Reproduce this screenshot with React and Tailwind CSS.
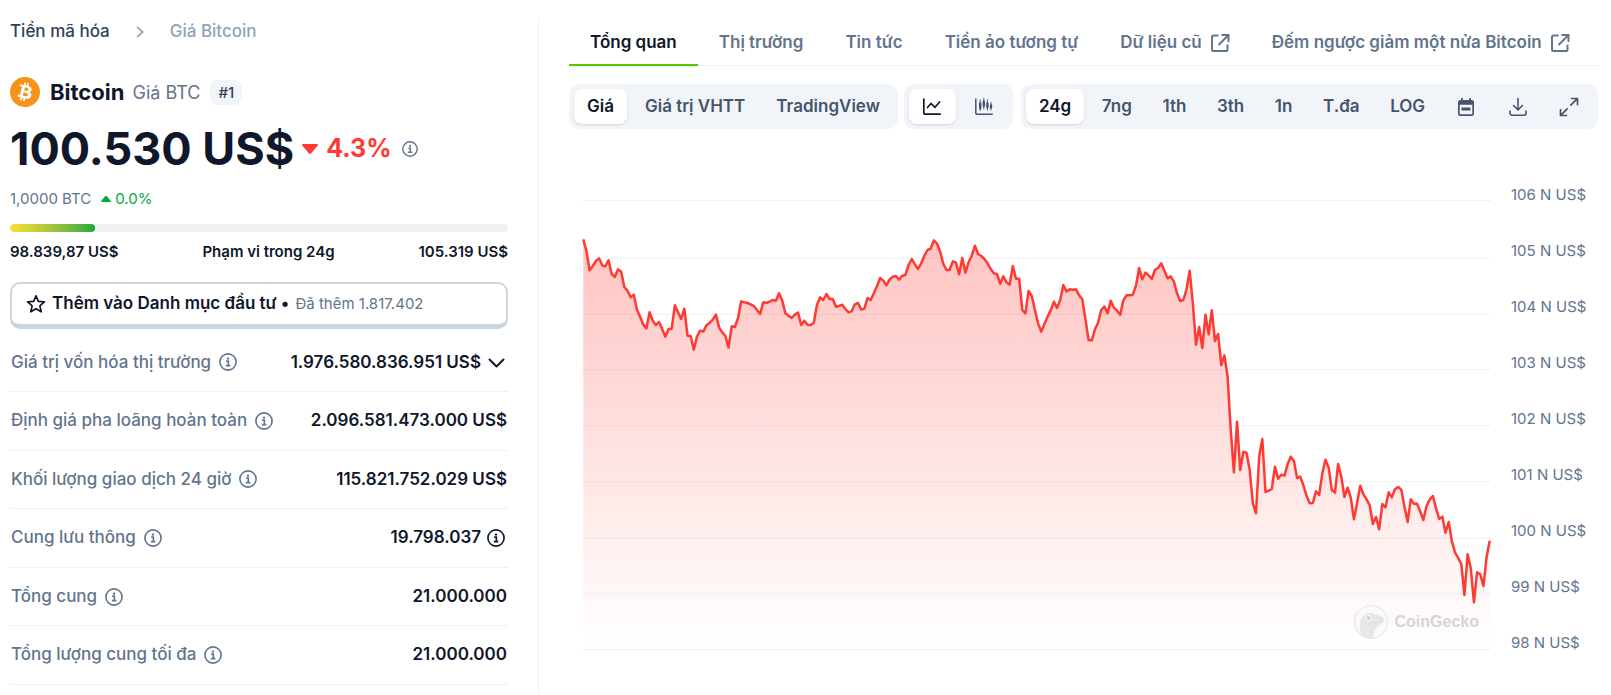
import { useState } from 'react';
import { SiBitcoin } from 'react-icons/si';

// Sampled every 5 minutes. Distance down the plot, 168 units per 1000 US$.
const SAMPLES = [
  148, 183, 241, 228, 213, 205, 226, 229, 211, 252, 261, 238, 245, 291, 302, 322, 314, 359, 380, 404,
  415, 367, 392, 405, 396, 418, 440, 417, 416, 346, 367, 387, 356, 437, 438, 479, 440, 422, 425, 406,
  399, 389, 374, 412, 427, 438, 473, 409, 411, 384, 334, 337, 339, 343, 348, 360, 372, 337, 339, 335,
  330, 332, 310, 332, 370, 377, 384, 374, 368, 405, 392, 404, 405, 398, 344, 322, 330, 312, 327, 327,
  350, 348, 344, 357, 367, 364, 343, 339, 359, 356, 324, 330, 310, 288, 264, 272, 286, 268, 260, 258,
  269, 257, 255, 225, 207, 223, 237, 220, 197, 180, 176, 151, 161, 185, 222, 240, 240, 214, 218, 253,
  204, 248, 217, 197, 167, 192, 198, 207, 220, 237, 250, 252, 281, 259, 277, 284, 228, 266, 266, 360,
  370, 303, 318, 360, 400, 425, 402, 380, 361, 335, 354, 330, 285, 304, 298, 299, 298, 316, 328, 388,
  450, 451, 418, 398, 360, 350, 370, 332, 353, 362, 374, 331, 316, 316, 314, 287, 234, 268, 248, 256,
  267, 240, 234, 220, 242, 265, 259, 275, 310, 333, 330, 298, 242, 340, 464, 411, 474, 374, 433, 361,
  453, 432, 525, 496, 560, 720, 847, 695, 840, 785, 788, 840, 940, 970, 800, 747, 906, 902, 897, 830,
  866, 854, 857, 823, 800, 813, 864, 860, 886, 917, 940, 939, 904, 915, 850, 809, 833, 900, 908, 822,
  860, 921, 893, 923, 988, 940, 887, 913, 928, 946, 1002, 981, 1018, 942, 952, 907, 922, 898, 891, 899,
  950, 996, 928, 941, 941, 965, 990, 948, 929, 918, 955, 987, 980, 1028, 996, 1053, 1087, 1104, 1122, 1215,
  1093, 1135, 1237, 1147, 1153, 1188, 1102, 1052,
];

const GRID = [32, 205, 373, 539, 707, 875, 1045, 1210, 1378];
const PRICE_LABELS = [106, 105, 104, 103, 102, 101, 100, 99, 98];

const TABS = [
  { label: 'Tổng quan' },
  { label: 'Thị trường' },
  { label: 'Tin tức' },
  { label: 'Tiền ảo tương tự' },
  { label: 'Dữ liệu cũ', external: true },
  { label: 'Đếm ngược giảm một nửa Bitcoin', external: true },
];

const METRICS = ['Giá', 'Giá trị VHTT', 'TradingView'];
const RANGES = ['24g', '7ng', '1th', '3th', '1n', 'T.đa', 'LOG'];

const STATS = [
  { label: 'Giá trị vốn hóa thị trường', value: '1.976.580.836.951 US$', expandable: true },
  { label: 'Định giá pha loãng hoàn toàn', value: '2.096.581.473.000 US$' },
  { label: 'Khối lượng giao dịch 24 giờ', value: '115.821.752.029 US$' },
  { label: 'Cung lưu thông', value: '19.798.037', info: true },
  { label: 'Tổng cung', value: '21.000.000' },
  { label: 'Tổng lượng cung tối đa', value: '21.000.000' },
];

const InfoIcon = ({ className }) => (
  <svg className={className} fill="none" viewBox="0 0 20 20" stroke="currentColor" strokeWidth={1.8}>
    <circle cx="10" cy="10" r="9" />
    <path d="M8 9h2.400v4.800M7.600 14h5" />
    <circle cx="10" cy="6.200" r="1.300" fill="currentColor" stroke="none" />
  </svg>
);

const ExternalIcon = () => (
  <svg className="size-5" fill="none" viewBox="0 0 20 20" stroke="currentColor" strokeWidth={2}>
    <path d="M8.500 2.500H3.500A1.500 1.500 0 0 0 2 4v12.500A1.500 1.500 0 0 0 3.500 18h12.500a1.500 1.500 0 0 0 1.500-1.500v-5" />
    <path d="M11.500 2H18.500v7M18 2.500 8.500 12" />
  </svg>
);

const StarIcon = () => (
  <svg className="size-5" fill="none" viewBox="0 0 20 20" stroke="currentColor" strokeWidth={1.7} strokeLinejoin="round">
    <path d="m10 1.800 2.400 5.500 6 .6-4.500 4 1.300 5.900-5.200-3.100-5.200 3.100 1.300-5.900-4.500-4 6-.6z" />
  </svg>
);

const ChevronDown = () => (
  <svg className="w-[18px] h-5" fill="none" viewBox="0 0 18 20" stroke="currentColor" strokeWidth={2} strokeLinecap="round" strokeLinejoin="round">
    <path d="m2.500 7.500 7 7 7-7" />
  </svg>
);

const LineChartIcon = () => (
  <svg className="size-5" fill="none" viewBox="0 0 20 20" stroke="currentColor" strokeWidth={1.7} strokeLinecap="round" strokeLinejoin="round">
    <path d="M1.800 2v14a1.200 1.200 0 0 0 1.200 1.200h15.200" />
    <path d="m5.500 10.500 3.500-4 4 3.800L17.600 5" />
  </svg>
);

const CandleIcon = () => (
  <svg className="size-5" fill="none" viewBox="0 0 20 20" stroke="currentColor" strokeWidth={1.5} strokeLinecap="round">
    <path d="M1.800 2v14a1.200 1.200 0 0 0 1.200 1.200h15.200" />
    <path d="M6.200 3v10.500M9.800 1.500v10.500M13.400 3v10M17 5.500v7.500" strokeWidth={1} />
    <path d="M6.200 6.500v4.500M9.800 4.800v4M13.400 6.500v3.500M17 8.500v2" strokeWidth={2.4} />
  </svg>
);

const CalendarIcon = () => (
  <svg className="size-5" fill="currentColor" viewBox="0 0 20 20">
    <path
      fillRule="evenodd"
      d="M5 1h1.800v2h6.400V1H15v2h.7A2.300 2.300 0 0 1 18 5.300v11.400A2.300 2.300 0 0 1 15.700 19H4.300A2.300 2.300 0 0 1 2 16.700V5.300A2.300 2.300 0 0 1 4.300 3H5zM3.700 7.800v8.700a.8.8 0 0 0 .8.8h11a.8.8 0 0 0 .8-.8V7.800z"
    />
    <rect x="5.500" y="10.500" width="9" height="3" rx=".5" />
  </svg>
);

const DownloadIcon = () => (
  <svg className="size-5" fill="none" viewBox="0 0 20 20" stroke="currentColor" strokeWidth={1.6} strokeLinecap="round" strokeLinejoin="round">
    <path d="M10 1.500v11M5.500 8.500l4.500 4.300 4.500-4.300" />
    <path d="M2 14v2a2.200 2.200 0 0 0 2.200 2.200h11.600A2.200 2.200 0 0 0 18 16v-2" />
  </svg>
);

const ExpandIcon = () => (
  <svg className="size-5" fill="none" viewBox="0 0 20 20" stroke="currentColor" strokeWidth={1.7} strokeLinecap="round" strokeLinejoin="round">
    <path d="M12.500 1.500h6v6M18.200 1.800l-6.400 6.400" />
    <path d="M7.500 18.500h-6v-6M1.800 18.200l6.400-6.400" />
  </svg>
);

const GeckoIcon = () => (
  <svg className="size-9" viewBox="0 0 36 36">
    <circle cx="18" cy="18" r="16.500" fill="#fafafa" stroke="#e9e7e7" strokeWidth="1.200" />
    <path
      fill="#e8e7e7"
      d="M8.500 31C6 25 6.500 19 8.500 14.500c2-4.500 6-6.200 10-5.500 3 .4 4.500 1.800 7.500 2.500 3 .8 5 2.200 5 4.500 0 3-3.500 4.500-6 6.500-2.500 2-4.500 5-4.500 11.500-4.500.8-9-.2-12-3z"
    />
    <circle cx="15.500" cy="14" r="3" fill="#fafafa" />
    <circle cx="15.500" cy="14" r="1.900" fill="#cfcdcd" />
    <path d="M20 18.500c3 1 6 .5 8.500-1.500" fill="none" stroke="#dbd9d9" strokeWidth=".8" />
    <circle cx="27" cy="14" r=".7" fill="#cfcdcd" />
  </svg>
);

function SegmentButton({ active, wide, label, onClick, children }) {
  return (
    <button
      type="button"
      aria-label={label}
      aria-pressed={active}
      onClick={onClick}
      className={`flex h-[35px] items-center justify-center rounded-lg whitespace-nowrap ${wide ? 'w-[47px]' : 'px-[13px]'} ${
        active ? 'bg-white text-slate-900 shadow' : 'text-slate-600'
      }`}
    >
      {children}
    </button>
  );
}

function CoinSummary() {
  return (
    <aside className="w-[529px] shrink-0 pt-px pr-[30px] border-r border-[#eff2f5]">
      <nav className="flex items-center h-6 text-[17px] font-medium">
        <a href="#coins" className="text-slate-700">Tiền mã hóa</a>
        <svg className="w-2 h-3 mx-[26px] text-slate-400" fill="none" viewBox="0 0 8 12" stroke="currentColor" strokeWidth={1.7}>
          <path d="m1 .8 5.700 5.200L1 11.200" />
        </svg>
        <span className="text-slate-400">Giá Bitcoin</span>
      </nav>

      <div className="mt-8 flex items-center h-8">
        <SiBitcoin className="size-[30px] text-[#f7931a]" />
        <h1 className="ml-2.5 flex items-center text-[22px] font-bold text-slate-900">
          Bitcoin
          <span className="ml-2 text-[18px] font-normal text-slate-500">Giá BTC</span>
        </h1>
        <span className="ml-2.5 h-[25px] rounded-lg bg-slate-100 px-2 text-[15px] leading-[25px] font-medium text-slate-700">
          #1
        </span>
      </div>

      <div className="mt-4 flex items-center h-[50px]">
        <span className="text-[45px] font-bold text-slate-900">100.530 US$</span>
        <span className="ml-2 flex items-center gap-2 text-[25px] font-bold text-[#ff3a33]">
          <svg className="w-4 h-2.5" fill="currentColor" viewBox="0 0 16 10">
            <path d="M1 0h14c1 0 1.300 1 .6 1.700L9.200 9.300a1.600 1.600 0 0 1-2.400 0L.4 1.700C-.3 1 0 0 1 0z" />
          </svg>
          4.3%
        </span>
        <InfoIcon className="ml-2.5 size-4 text-slate-500" />
      </div>

      <div className="mt-[15px] flex items-center h-5 text-[15px] text-slate-500">
        1,0000 BTC
        <span className="ml-2.5 flex items-center gap-1 text-[#00a83e]">
          <svg className="w-2.5 h-1.5" fill="currentColor" viewBox="0 0 10 6">
            <path d="M1 6h8c.8 0 1-.7.5-1.200L6.200.5a1.700 1.700 0 0 0-2.400 0L.5 4.800C0 5.300.2 6 1 6z" />
          </svg>
          0.0%
        </span>
      </div>

      <div className="mt-[15px] h-2 overflow-hidden rounded bg-[#eff2f5]">
        <div className="h-2 w-[17%] rounded bg-gradient-to-r from-[#fcdf36] to-[#00a83e]" />
      </div>
      <div className="mt-2 flex justify-between text-[15px] leading-6 font-semibold text-slate-900">
        <span>98.839,87 US$</span>
        <span>Phạm vi trong 24g</span>
        <span>105.319 US$</span>
      </div>

      <button
        type="button"
        className="mt-[18px] flex h-[47px] w-full items-center rounded-[10px] border-2 border-b-5 border-slate-300 px-3.5 text-slate-900"
      >
        <StarIcon />
        <span className="ml-1.5 text-[17px] font-semibold">Thêm vào Danh mục đầu tư •</span>
        <span className="ml-1.5 text-[15px] text-slate-500">Đã thêm 1.817.402</span>
      </button>

      <table className="mt-[5px] h-[351px] w-full border-collapse text-[17px]">
        <tbody>
          {STATS.map((row) => (
            <tr key={row.label} className="border-b border-[#eff2f5]">
              <th scope="row" className="pl-px text-left font-medium text-slate-500">
                <span className="flex items-center gap-2 whitespace-nowrap">
                  {row.label}
                  <InfoIcon className="size-[18px]" />
                </span>
              </th>
              <td className="pr-px font-semibold text-slate-900">
                <span className="flex items-center justify-end gap-1.5 whitespace-nowrap">
                  {row.value}
                  {row.info && <InfoIcon className="size-[18px] mr-0.5" />}
                  {row.expandable && (
                    <button type="button" aria-label="Mở rộng" className="pr-0.5">
                      <ChevronDown />
                    </button>
                  )}
                </span>
              </td>
            </tr>
          ))}
        </tbody>
      </table>
    </aside>
  );
}

function PriceChart() {
  const last = SAMPLES.length - 1;
  const line = SAMPLES.map((y, i) => `${i},${y}`).join(' ');

  return (
    <div className="mt-[61px] flex items-start pl-[13px]">
      <div className="relative min-w-0 flex-1">
        <svg className="block h-[462px] w-full" viewBox={`-0.4 0 ${last + 0.8} 1386`} preserveAspectRatio="none">
          <defs>
            <linearGradient id="price-fill" gradientUnits="userSpaceOnUse" x1="0" y1="148" x2="0" y2="1378">
              <stop offset="0" stopColor="#ff3a33" stopOpacity="0.3" />
              <stop offset="1" stopColor="#ff3a33" stopOpacity="0" />
            </linearGradient>
          </defs>
          {GRID.map((y) => (
            <line key={y} x1="-0.4" x2={last + 0.4} y1={y} y2={y} stroke="#eff2f5" vectorEffect="non-scaling-stroke" />
          ))}
          <polygon points={`0,1378 ${line} ${last},1378`} fill="url(#price-fill)" />
          <polyline
            points={line}
            fill="none"
            stroke="#ff3a33"
            strokeWidth="2.500"
            strokeLinejoin="round"
            vectorEffect="non-scaling-stroke"
          />
        </svg>
        <div className="absolute right-3 bottom-3 flex items-center gap-1.5">
          <GeckoIcon />
          <span className="font-['Liberation_Sans',sans-serif] text-[16px] font-bold text-[#d6d4d4]">CoinGecko</span>
        </div>
      </div>
      <ul className="ml-5 w-[87px] text-[15px] text-slate-500">
        {PRICE_LABELS.map((price) => (
          <li key={price} className="h-14 leading-[10px]">{price} N US$</li>
        ))}
      </ul>
    </div>
  );
}

export default function App() {
  const [metric, setMetric] = useState('Giá');
  const [range, setRange] = useState('24g');
  const [candles, setCandles] = useState(false);

  return (
    <div className="flex bg-white pt-[19px] pl-2.5 font-['Inter',sans-serif]">
      <CoinSummary />

      <main className="ml-[30px] mr-[13px] min-w-0 flex-1">
        {/* Tabs */}
        <nav className="flex h-[47px] border-b border-[#eff2f5] text-[17px] font-semibold">
          {TABS.map((tab, i) => (
            <a
              key={tab.label}
              href="#tab"
              className={`-mb-px flex items-center gap-2 border-b-2 px-[21px] pt-0.5 whitespace-nowrap ${
                i === 0 ? 'border-[#4bcc00] text-slate-900' : 'border-transparent text-slate-500'
              }`}
            >
              {tab.label}
              {tab.external && <ExternalIcon />}
            </a>
          ))}
        </nav>

        {/* Chart controls */}
        <div className="mt-[18px] flex text-[17px] font-semibold">
          <div className="flex gap-[5px] rounded-[10px] bg-slate-100 p-[5px]">
            {METRICS.map((name) => (
              <SegmentButton key={name} active={metric === name} onClick={() => setMetric(name)}>
                {name}
              </SegmentButton>
            ))}
          </div>
          <div className="ml-1.5 flex gap-[5px] rounded-[10px] bg-slate-100 p-[5px]">
            <SegmentButton wide label="Biểu đồ đường" active={!candles} onClick={() => setCandles(false)}>
              <LineChartIcon />
            </SegmentButton>
            <SegmentButton wide label="Biểu đồ nến" active={candles} onClick={() => setCandles(true)}>
              <CandleIcon />
            </SegmentButton>
          </div>
          <div className="ml-2 flex flex-1 justify-between rounded-[10px] bg-slate-100 p-[5px]">
            {RANGES.map((name) => (
              <SegmentButton key={name} active={range === name} onClick={() => setRange(name)}>
                {name}
              </SegmentButton>
            ))}
            <SegmentButton wide label="Chọn ngày"><CalendarIcon /></SegmentButton>
            <SegmentButton wide label="Tải xuống"><DownloadIcon /></SegmentButton>
            <SegmentButton wide label="Toàn màn hình"><ExpandIcon /></SegmentButton>
          </div>
        </div>

        <PriceChart />
      </main>
    </div>
  );
}
